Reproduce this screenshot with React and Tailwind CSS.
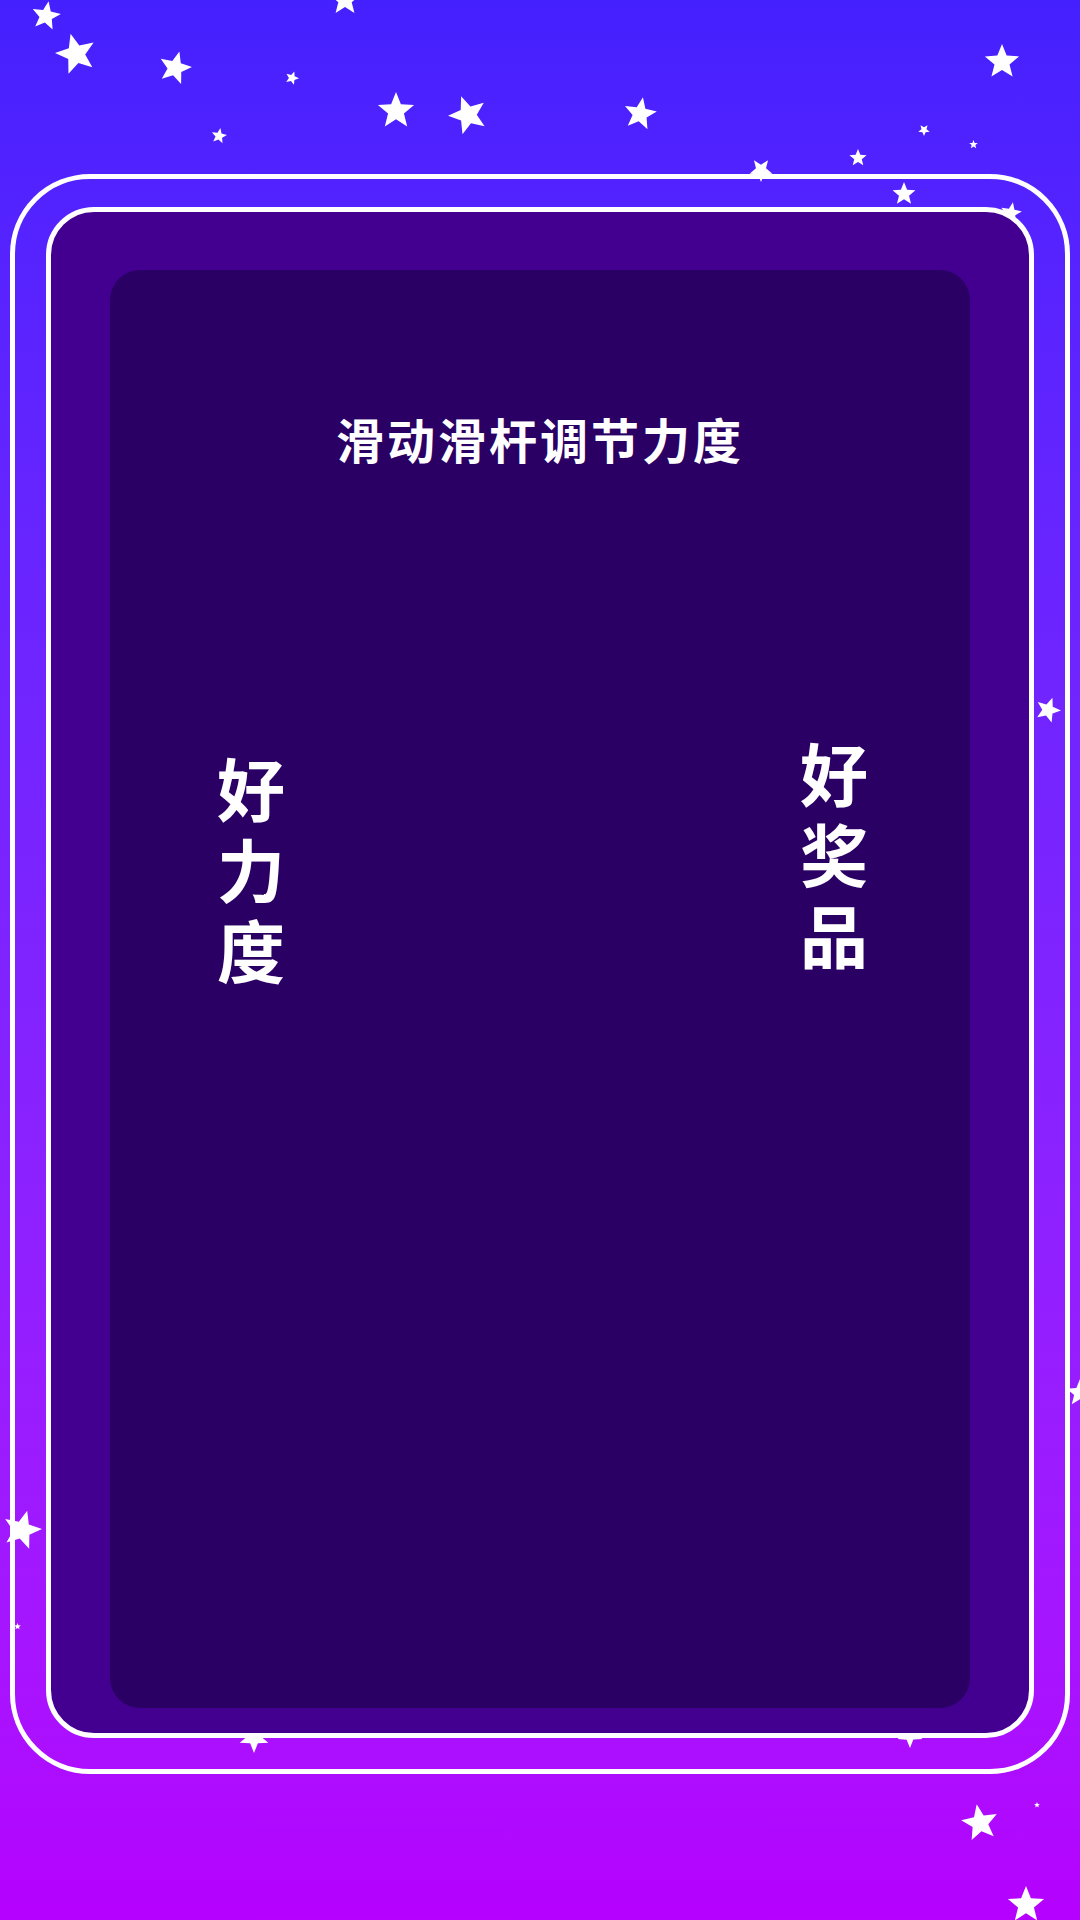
import React from 'react';

// ─── Decorative stars scattered over the gradient background ────────────────
// [centerX, centerY, size, rotation]
const STARS = [
  [46, 16, 30, 10],
  [76, 54, 42, -15],
  [175, 68, 34, 15],
  [292, 78, 14, 20],
  [219, 136, 16, 10],
  [396, 111, 38, 0],
  [468, 115, 40, -20],
  [345, 0, 32, 0],
  [1002, 62, 36, 0],
  [640, 114, 34, 10],
  [761, 170, 24, 36],
  [858, 158, 18, 0],
  [924, 130, 12, 36],
  [973, 144, 9, 0],
  [904, 194, 24, 0],
  [1011, 213, 22, 10],
  [1048, 710, 26, 20],
  [1080, 1393, 28, 0],
  [22, 1530, 40, 15],
  [17, 1626, 7, 0],
  [254, 1738, 30, 36],
  [910, 1735, 26, 36],
  [980, 1823, 38, -10],
  [1037, 1805, 6, 0],
  [1026, 1905, 38, 0],
];

function Star({ x, y, size, rot }) {
  return (
    <svg
      viewBox="0 0 100 100"
      className="absolute"
      style={{
        left: x - size / 2,
        top: y - size / 2,
        width: size,
        height: size,
        transform: `rotate(${rot}deg)`,
      }}
    >
      <polygon
        fill="#ffffff"
        points="50,0 62.9,32.2 97.6,34.5 70.9,56.8 79.4,90.5 50,72 20.6,90.5 29.1,56.8 2.4,34.5 37.1,32.2"
      />
    </svg>
  );
}

// one character per line, kept as a single text block
function VerticalText({ text, className = '' }) {
  const chars = text.split('');
  return (
    <p className={`w-[68px] text-center text-[68px] leading-[81px] font-bold text-white ${className}`}>
      {chars.map((ch, i) => (
        <React.Fragment key={i}>
          {ch}
          {i < chars.length - 1 && <br />}
        </React.Fragment>
      ))}
    </p>
  );
}

export default function App() {
  return (
    <div
      className="relative w-[1080px] h-[1920px] overflow-hidden bg-gradient-to-b from-[#4520ff] to-[#b500ff]"
      style={{ fontFamily: '"Noto Sans CJK SC", "Noto Sans", sans-serif' }}
    >
      {/* star layer */}
      <div className="absolute inset-0">
        {STARS.map(([x, y, size, rot], i) => (
          <Star key={i} x={x} y={y} size={size} rot={rot} />
        ))}
      </div>

      {/* outer frame */}
      <div className="relative mt-[174px] mx-[10px] h-[1600px] rounded-[80px] border-[5px] border-white pt-[28px] px-[31px] pb-[31px]">
        {/* card */}
        <div className="h-full rounded-[48px] border-[5px] border-white bg-[#430090] pt-[58px] px-[59px] pb-[25px]">
          {/* dark panel */}
          <div className="h-full rounded-[30px] bg-[#2a0064] pt-[144px]">
            <h1 className="text-center text-[48px] leading-[48px] font-bold tracking-[3px] text-white">
              滑动滑杆调节力度
            </h1>

            <div className="flex justify-between pl-[107px] pr-[102px]">
              <VerticalText text="好力度" className="mt-[284px]" />
              <VerticalText text="好奖品" className="mt-[269px]" />
            </div>
          </div>
        </div>
      </div>
    </div>
  );
}
